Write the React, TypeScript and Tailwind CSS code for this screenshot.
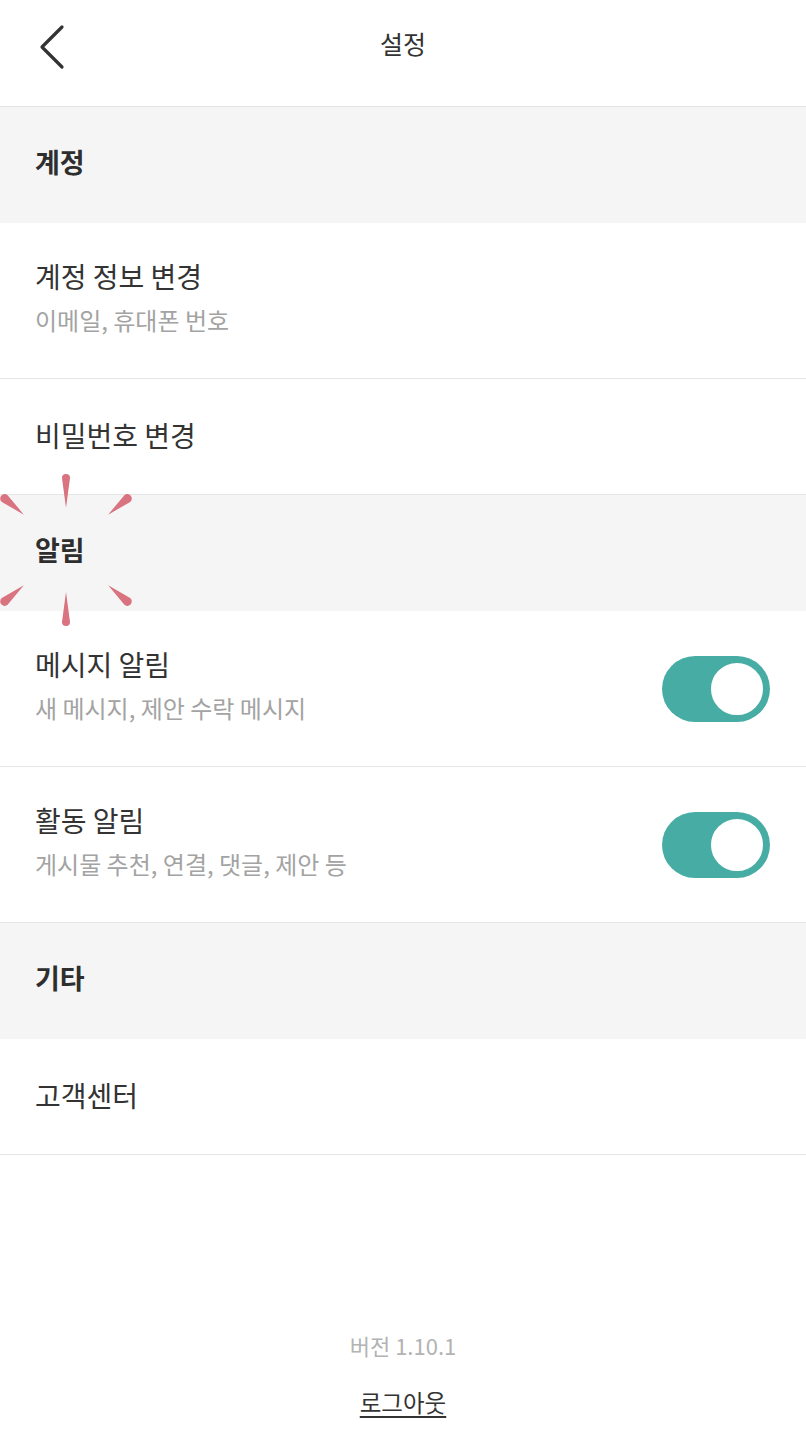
import React from "react";

const font = { fontFamily: '"Noto Sans CJK KR", "Noto Sans", sans-serif' };

function Toggle() {
  return (
    <div className="flex h-[66px] w-[108px] items-center justify-end rounded-full bg-[#47ada4] p-[3px]">
      <div className="h-[60px] w-[60px] rounded-full border-[4px] border-[#47ada4] bg-white" />
    </div>
  );
}

function SectionHeader({ title }: { title: string }) {
  return (
    <div className="flex h-[116px] items-center bg-[#f5f5f5] px-[35px] pb-[6px]">
      <span className="text-[27px] font-bold text-[#2e2e2e]">{title}</span>
    </div>
  );
}

function Row({ title, sub, toggle }: { title: string; sub?: string; toggle?: boolean }) {
  return (
    <div
      className={`flex items-center justify-between border-b border-[#e6e6e6] bg-white pl-[35px] pr-[36px] ${
        sub ? "h-[156px] pb-[8px]" : "h-[116px] pb-[4px]"
      }`}
    >
      <div className="flex flex-col">
        <span className="text-[28px] leading-[38px] text-[#333]">{title}</span>
        {sub && <span className="mt-[9px] text-[24px] leading-[32px] text-[#a3a3a3]">{sub}</span>}
      </div>
      {toggle && (
        <div className="mt-[8px]">
          <Toggle />
        </div>
      )}
    </div>
  );
}

function Sparkle() {
  const petals = [
    { a: 0, r1: 42, r2: 72, w: 4 },
    { a: 180, r1: 42, r2: 72, w: 4 },
    { a: 50, r1: 55, r2: 80, w: 4.5 },
    { a: -50, r1: 55, r2: 80, w: 4.5 },
    { a: 130, r1: 55, r2: 80, w: 4.5 },
    { a: -130, r1: 55, r2: 80, w: 4.5 },
  ];
  return (
    <svg className="pointer-events-none absolute left-0 top-[470px]" width="140" height="160" viewBox="0 0 140 160">
      <g transform="translate(66 80)">
        {petals.map((p, i) => (
          <path
            key={i}
            transform={`rotate(${p.a})`}
            d={`M0 ${-p.r1} L${-p.w} ${-p.r2} A${p.w} ${p.w} 0 0 1 ${p.w} ${-p.r2} Z`}
            fill="#d9737f"
          />
        ))}
      </g>
    </svg>
  );
}

export default function App() {
  return (
    <div className="relative min-h-[1445px] w-full bg-white" style={font}>
      <div className="h-[107px] border-b border-[#e3e3e3]">
        <div className="relative flex h-[88px] items-center justify-center">
          <svg className="absolute left-[38px] top-[24px]" width="28" height="46" viewBox="0 0 28 46">
            <path d="M24 3 L4 23 L24 43" fill="none" stroke="#333" strokeWidth="3.2" strokeLinecap="round" strokeLinejoin="round" />
          </svg>
          <span className="text-[25px] text-[#333]">설정</span>
        </div>
      </div>

      <SectionHeader title="계정" />
      <Row title="계정 정보 변경" sub="이메일, 휴대폰 번호" />
      <Row title="비밀번호 변경" />
      <SectionHeader title="알림" />
      <Row title="메시지 알림" sub="새 메시지, 제안 수락 메시지" toggle />
      <Row title="활동 알림" sub="게시물 추천, 연결, 댓글, 제안 등" toggle />
      <SectionHeader title="기타" />
      <Row title="고객센터" />

      <div className="mt-[174px] flex flex-col items-center">
        <span className="text-[22px] leading-[32px] text-[#b3b3b3]">버전 1.10.1</span>
        <span className="mt-[25px] text-[23.5px] leading-[32px] text-[#333] underline underline-offset-4">로그아웃</span>
      </div>

      <Sparkle />
    </div>
  );
}
